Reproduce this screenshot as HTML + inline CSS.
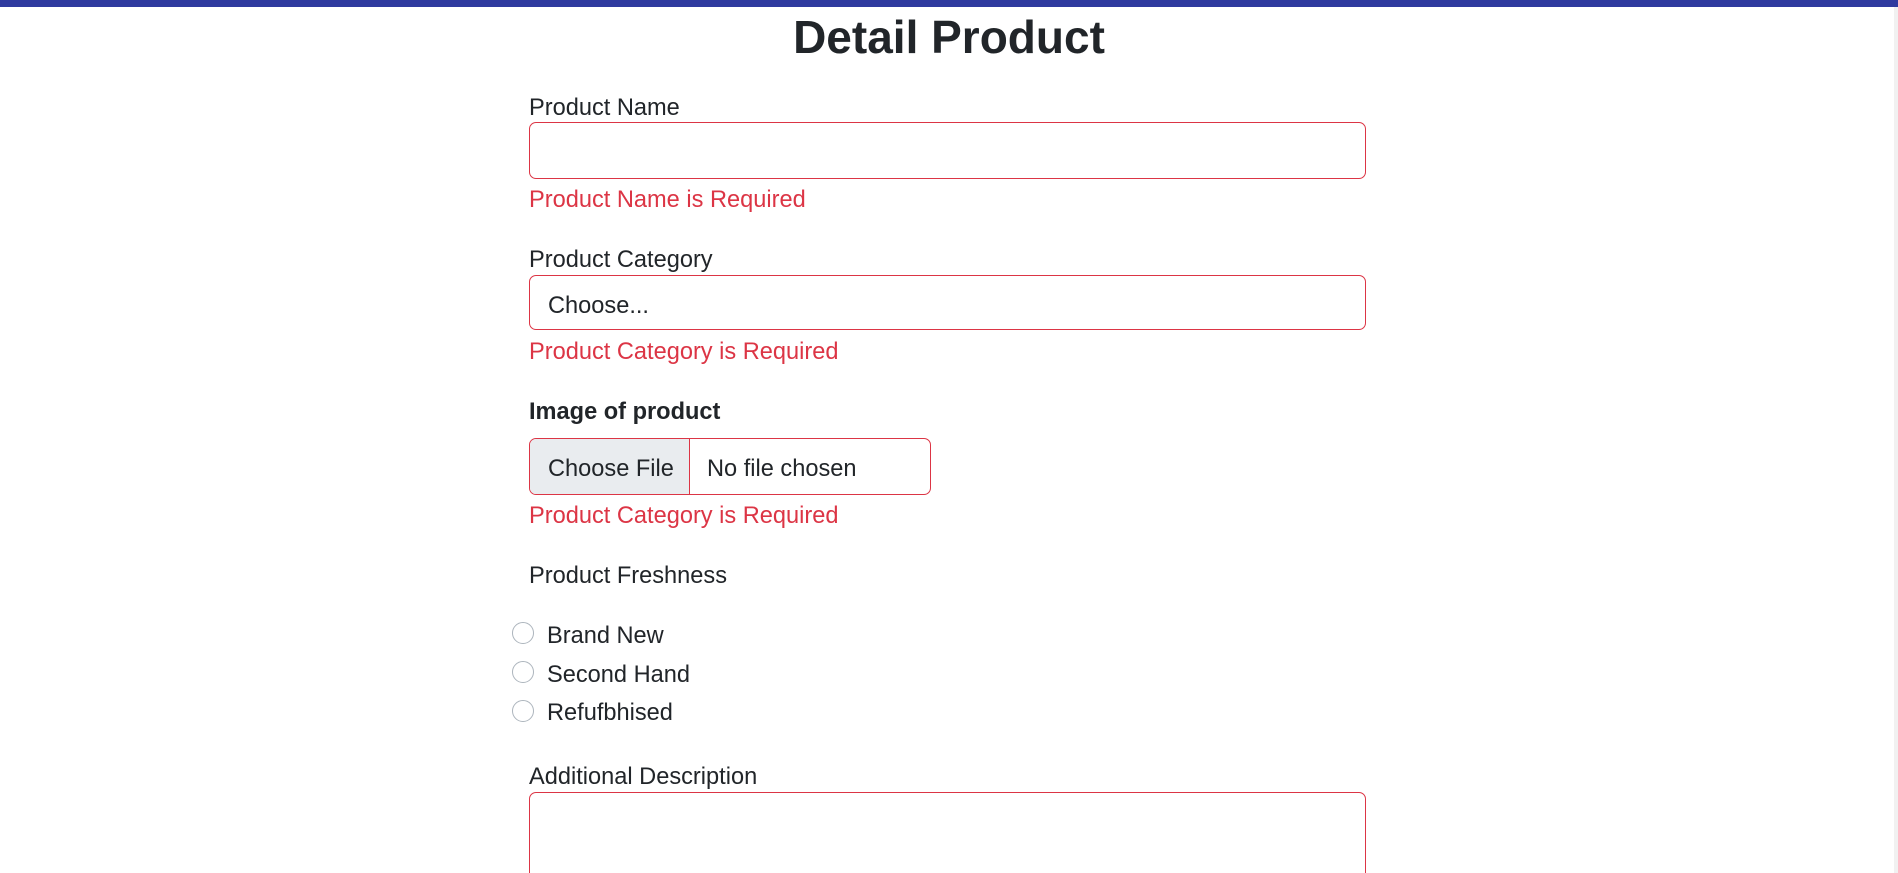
<!DOCTYPE html>
<html><head><meta charset="utf-8"><style>
html,body{margin:0;padding:0;background:#fff;width:1898px;height:873px;overflow:hidden;font-family:"Liberation Sans",Arial,sans-serif;color:#212529;position:relative}
.a{position:absolute;white-space:nowrap}
.bar{position:absolute;left:0;top:0;width:1898px;height:7px;background:#2f3a9f}
.sb{position:absolute;right:0;top:7px;width:4px;height:866px;background:#f1f1f1}
h1{position:absolute;left:0;width:1898px;top:7px;margin:0;text-align:center;font-size:46px;font-weight:bold;line-height:60px}
.lbl{font-size:23.6px;line-height:28px}
.err{font-size:23.6px;line-height:28px;color:#dc3545}
.box{position:absolute;border:1px solid #dc3545;border-radius:7px;box-sizing:border-box;background:#fff}
.rad{position:absolute;width:22px;height:22px;border:1px solid #adb5bd;border-radius:50%;box-sizing:border-box;left:512px}
</style></head><body>
<div class="bar"></div>
<div class="sb"></div>
<h1>Detail Product</h1>

<div class="a lbl" style="left:529px;top:94px">Product Name</div>
<div class="box" style="left:529px;top:122px;width:837px;height:57px"></div>
<div class="a err" style="left:529px;top:186px">Product Name is Required</div>

<div class="a lbl" style="left:529px;top:246px">Product Category</div>
<div class="box" style="left:529px;top:275px;width:837px;height:55px"></div>
<div class="a lbl" style="left:548px;top:292px">Choose...</div>
<div class="a err" style="left:529px;top:338px">Product Category is Required</div>

<div class="a lbl" style="left:529px;top:398px;font-weight:bold">Image of product</div>
<div class="box" style="left:529px;top:438px;width:402px;height:57px;overflow:hidden">
  <div style="position:absolute;left:0;top:0;width:159px;height:57px;background:#e9ecef;border-right:1px solid #dc3545"></div>
</div>
<div class="a lbl" style="left:548px;top:455px">Choose File</div>
<div class="a lbl" style="left:707px;top:455px">No file chosen</div>
<div class="a err" style="left:529px;top:502px">Product Category is Required</div>

<div class="a lbl" style="left:529px;top:562px">Product Freshness</div>
<div class="rad" style="top:622px"></div>
<div class="a lbl" style="left:547px;top:622px">Brand New</div>
<div class="rad" style="top:661px"></div>
<div class="a lbl" style="left:547px;top:661px">Second Hand</div>
<div class="rad" style="top:700px"></div>
<div class="a lbl" style="left:547px;top:699px">Refufbhised</div>

<div class="a lbl" style="left:529px;top:763px">Additional Description</div>
<div class="box" style="left:529px;top:792px;width:837px;height:100px"></div>
</body></html>
